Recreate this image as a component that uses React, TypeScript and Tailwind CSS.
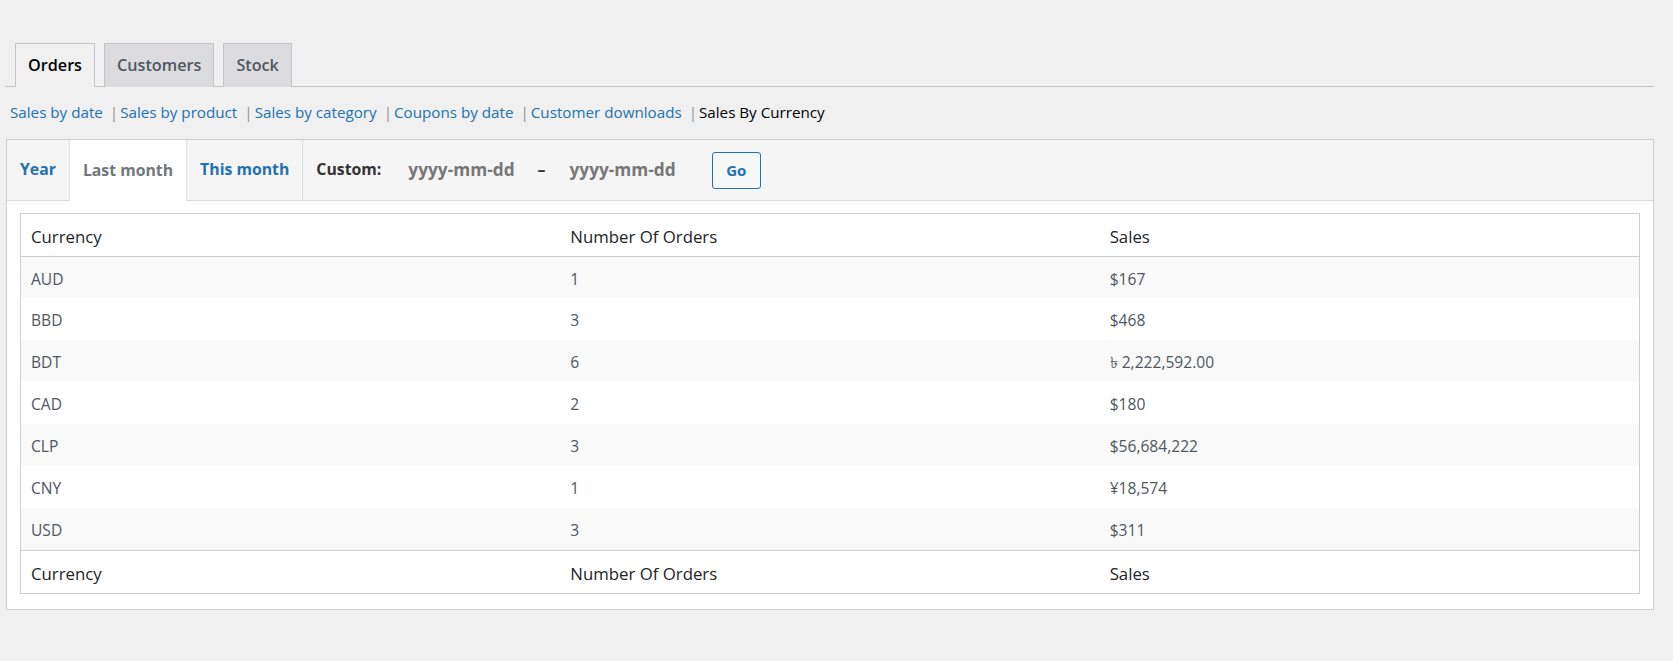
import React from 'react';

const FONT = { fontFamily: '"Open Sans", "Liberation Sans", sans-serif' };

const tabs = [
    { label: 'Orders', active: true },
    { label: 'Customers', active: false },
    { label: 'Stock', active: false },
];

const links = [
    'Sales by date',
    'Sales by product',
    'Sales by category',
    'Coupons by date',
    'Customer downloads',
];

const rows = [
    { cur: 'AUD', orders: 1, sales: '$167' },
    { cur: 'BBD', orders: 3, sales: '$468' },
    { cur: 'BDT', orders: 6, sales: '৳ 2,222,592.00' },
    { cur: 'CAD', orders: 2, sales: '$180' },
    { cur: 'CLP', orders: 3, sales: '$56,684,222' },
    { cur: 'CNY', orders: 1, sales: '¥18,574' },
    { cur: 'USD', orders: 3, sales: '$311' },
];

function HeadRow({ top }: { top?: boolean }) {
    const cls = top ? 'h-[42px] border-b border-[#ccd0d4]' : 'h-[43px] border-t border-[#ccd0d4]';
    return (
        <tr className={cls}>
            {['Currency', 'Number Of Orders', 'Sales'].map((h) => (
                <th
                    key={h}
                    className="px-[10px] pt-[4px] text-left align-middle text-[16.8px] font-normal text-[#1d2327]"
                >
                    {h}
                </th>
            ))}
        </tr>
    );
}

export default function App() {
    return (
        <div className="min-h-screen bg-[#f0f0f1] pb-10" style={FONT}>
            {/* top nav tabs */}
            <div className="ml-[5px] mr-[19px] flex items-end gap-[9px] border-b border-[#c3c4c7] pl-[10px] pt-[43px]">
                {tabs.map((t) => (
                    <div
                        key={t.label}
                        className={
                            'mb-[-1px] flex h-[44px] items-center border border-b-0 border-[#c3c4c7] px-[12px] text-[16.2px] font-semibold ' +
                            (t.active ? 'bg-[#f0f0f1] text-black' : 'bg-[#dcdcde] text-[#50575e]')
                        }
                    >
                        {t.label}
                    </div>
                ))}
            </div>

            {/* sub links */}
            <div className="ml-[10px] mt-[10px] flex h-[30px] items-center text-[15.2px] leading-[30px]">
                {links.map((l) => (
                    <React.Fragment key={l}>
                        <span className="text-[#2271b1]">{l}</span>
                        <span className="ml-[7px] mr-[2px] text-[#8c8f94]">|</span>
                    </React.Fragment>
                ))}
                <span className="text-black">Sales By Currency</span>
            </div>

            {/* report box */}
            <div className="ml-[6px] mr-[19px] mt-[12px] border border-[#ccd0d4] bg-white">
                <div className="flex h-[61px] items-stretch border-b border-[#dcdcde] bg-[#f5f5f5] text-[15.8px] font-bold">
                    <div className="flex items-center border-r border-[#dfdfdf] px-[13px] text-[#2271b1]">Year</div>
                    <div className="mb-[-1px] flex items-center border-r border-[#dfdfdf] bg-white px-[13px] text-[#72777c]">
                        Last month
                    </div>
                    <div className="flex items-center border-r border-[#dfdfdf] px-[13px] text-[#2271b1]">This month</div>
                    <div className="flex items-center pl-[13px]">
                        <span className="text-[#333]">Custom:</span>
                        <span className="ml-[27px] text-[17.3px] text-[#777]">yyyy-mm-dd</span>
                        <span className="ml-[23px] text-[#333]">–</span>
                        <span className="ml-[24px] text-[17.3px] text-[#777]">yyyy-mm-dd</span>
                        <button className="ml-[36px] flex h-[37px] w-[49px] items-center justify-center rounded-[3px] border border-[#2271b1] bg-[#f6f7f7] text-[15px] font-bold text-[#2271b1]">
                            Go
                        </button>
                    </div>
                </div>

                <div className="mx-[13px] mb-[15px] mt-[12px] border border-[#ccd0d4] bg-white">
                    <table className="w-full table-fixed border-collapse">
                        <thead>
                            <HeadRow top />
                        </thead>
                        <tbody>
                            {rows.map((r, i) => (
                                <tr key={r.cur} className={i % 2 === 0 ? 'bg-[#f9f9f9]' : 'bg-white'}>
                                    <td className="h-[42px] px-[10px] pt-[4px] align-middle text-[15.6px] text-[#50575e]">{r.cur}</td>
                                    <td className="h-[42px] px-[10px] pt-[4px] align-middle text-[15.6px] text-[#50575e]">{r.orders}</td>
                                    <td className="h-[42px] px-[10px] pt-[4px] align-middle text-[15.6px] text-[#50575e]">{r.sales}</td>
                                </tr>
                            ))}
                        </tbody>
                        <tfoot>
                            <HeadRow />
                        </tfoot>
                    </table>
                </div>
            </div>
        </div>
    );
}
